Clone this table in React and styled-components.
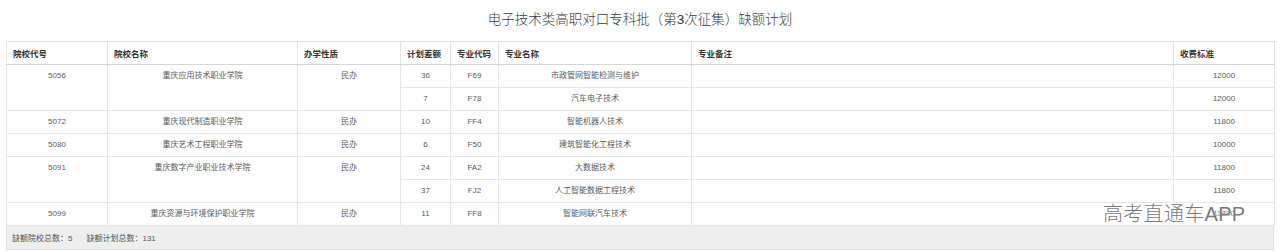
import styled, { createGlobalStyle } from 'styled-components';

const GlobalStyle = createGlobalStyle`
  html, body {
    margin: 0;
    padding: 0;
    background: #fff;
    font-family: "Liberation Sans", "Noto Sans CJK SC", sans-serif;
  }
`;

const Page = styled.div`
  position: relative;
  padding: 0 6px;
  width: 1268px;
`;

const Title = styled.h1`
  margin: 0;
  padding-top: 11px;
  height: 41px;
  box-sizing: border-box;
  font-size: 13.5px;
  line-height: 18px;
  font-weight: 300;
  color: #3a3a3a;
  text-align: center;
`;

const Table = styled.table`
  width: 1268px;
  border-collapse: collapse;
  table-layout: fixed;
  font-size: 8px;
  color: #5a5a5a;
`;

const Th = styled.th`
  height: 22px;
  padding: 0 6px;
  border: 1px solid #e2e2e2;
  border-bottom: 1px solid #d6d6d6;
  text-align: left;
  font-weight: bold;
  color: #333;
  font-size: 8.5px;
`;

const Td = styled.td`
  height: 22px;
  padding: 0 4px;
  border: 1px solid #e6e6e6;
  text-align: center;
  vertical-align: ${p => (p.$top ? 'top' : 'middle')};
  line-height: 22px;
  white-space: nowrap;
`;

const Footer = styled.div`
  display: flex;
  gap: 14px;
  align-items: center;
  height: 23px;
  padding: 0 5px;
  background: #eeeeee;
  border: 1px solid #e2e2e2;
  border-top: none;
  font-size: 8px;
  color: #555;
`;

// 水印：盖在最后一行上面
const Watermark = styled.div`
  position: absolute;
  left: 1103px;
  top: 198px;
  font-size: 20px;
  font-weight: 300;
  color: #7a7a7a;
  letter-spacing: 0.3px;
  text-shadow: 0 0 1px #fff, 0 0 2px #fff;
  pointer-events: none;
`;

const widths = [101, 190, 103, 50, 48, 193, 482, 101];
const heads = ['院校代号', '院校名称', '办学性质', '计划差额', '专业代码', '专业名称', '专业备注', '收费标准'];

const schools = [
  { code: '5056', name: '重庆应用技术职业学院', kind: '民办', majors: [['36', 'F69', '市政管网智能检测与维护', '12000'], ['7', 'F78', '汽车电子技术', '12000']] },
  { code: '5072', name: '重庆现代制造职业学院', kind: '民办', majors: [['10', 'FF4', '智能机器人技术', '11800']] },
  { code: '5080', name: '重庆艺术工程职业学院', kind: '民办', majors: [['6', 'F50', '建筑智能化工程技术', '10000']] },
  { code: '5091', name: '重庆数字产业职业技术学院', kind: '民办', majors: [['24', 'FA2', '大数据技术', '11800'], ['37', 'FJ2', '人工智能数据工程技术', '11800']] },
  { code: '5099', name: '重庆资源与环境保护职业学院', kind: '民办', majors: [['11', 'FF8', '智能网联汽车技术', '11800']] },
];

function App() {
  return (
    <>
      <GlobalStyle />
      <Page>
        <Title>电子技术类高职对口专科批（第3次征集）缺额计划</Title>
        <Table>
          <colgroup>
            {widths.map((w, i) => <col key={i} style={{ width: w }} />)}
          </colgroup>
          <thead>
            <tr>{heads.map(h => <Th key={h}>{h}</Th>)}</tr>
          </thead>
          <tbody>
            {schools.flatMap(s =>
              s.majors.map((m, i) => (
                <tr key={s.code + m[1]}>
                  {i === 0 && (
                    <>
                      <Td rowSpan={s.majors.length} $top>{s.code}</Td>
                      <Td rowSpan={s.majors.length} $top>{s.name}</Td>
                      <Td rowSpan={s.majors.length} $top>{s.kind}</Td>
                    </>
                  )}
                  <Td>{m[0]}</Td>
                  <Td>{m[1]}</Td>
                  <Td>{m[2]}</Td>
                  <Td></Td>
                  <Td>{m[3]}</Td>
                </tr>
              ))
            )}
          </tbody>
        </Table>
        <Footer>
          <span>缺额院校总数：5</span>
          <span>缺额计划总数：131</span>
        </Footer>
        <Watermark>高考直通车APP</Watermark>
      </Page>
    </>
  );
}

export default App;
